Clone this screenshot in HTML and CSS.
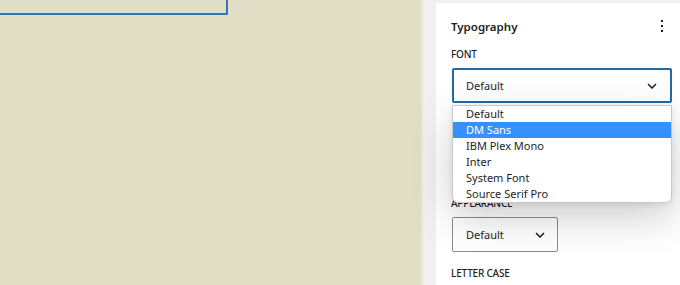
FILE: index.html
```html
<!DOCTYPE html>
<html>
<head>
<meta charset="utf-8">
<link rel="stylesheet" href="styles.css">
</head>
<body>
<div class="app">
  <div class="canvas">
    <div class="block"></div>
  </div>
  <div class="sidebar">
    <div class="panel">
      <div class="panel-head">
        <span class="title">Typography</span>
        <span class="kebab"><i></i><i></i><i></i></span>
      </div>
      <div class="field">
        <div class="label">Font</div>
        <div class="select focused">
          <span>Default</span>
          <svg class="chev" width="10" height="6" viewBox="0 0 10 6"><path d="M1 1l4 4 4-4" fill="none" stroke="#1e1e1e" stroke-width="1.5"/></svg>
        </div>
        <ul class="menu">
          <li>Default</li>
          <li class="sel">DM Sans</li>
          <li>IBM Plex Mono</li>
          <li>Inter</li>
          <li>System Font</li>
          <li>Source Serif Pro</li>
        </ul>
      </div>
      <div class="hidden-field">
        <div class="size-box"></div>
      </div>
      <div class="label">Appearance</div>
      <div class="select small">
        <span>Default</span>
        <svg class="chev" width="10" height="6" viewBox="0 0 10 6"><path d="M1 1l4 4 4-4" fill="none" stroke="#1e1e1e" stroke-width="1.5"/></svg>
      </div>
      <div class="label gap">Letter case</div>
    </div>
  </div>
</div>
</body>
</html>
```
FILE: styles.css
```css
* { box-sizing: border-box; }
html, body { margin: 0; padding: 0; }
body {
  width: 680px;
  height: 285px;
  overflow: hidden;
  font-family: "Noto Sans", "Open Sans", sans-serif;
  color: #1e1e1e;
  background: #e0dfc6;
}
.app { display: flex; height: 285px; }
.canvas { width: 421px; flex: none; background: #e0dfc6; }
.block {
  width: 228px;
  height: 15px;
  border-right: 2px solid #2f74b6;
  border-bottom: 2px solid #2f74b6;
}
.sidebar {
  flex: 1;
  background: #f0f0f0;
  border-left: 2px solid #e6e6da;
  padding: 3px 0 0 13px;
}
.panel {
  background: #fff;
  height: 100%;
  padding: 13px 8px 0 15px;
}
.panel-head {
  display: flex;
  justify-content: space-between;
  align-items: center;
  height: 20px;
}
.title { font-size: 11.5px; font-weight: 600; }
.kebab {
  display: flex;
  flex-direction: column;
  gap: 3px;
  margin-right: 9px;
}
.kebab i { display: block; width: 2px; height: 2px; background: #1e1e1e; }
.label {
  font-size: 10px;
  font-weight: 500;
  letter-spacing: -0.2px;
  text-transform: uppercase;
  line-height: 16px;
  margin-top: 10px;
}
.field { position: relative; }
.select {
  margin-top: 6px;
  height: 35px;
  border: 1px solid #8c8c8c;
  border-radius: 2px;
  display: flex;
  align-items: center;
  justify-content: space-between;
  padding: 0 13px 0 13px;
  font-size: 11px;
}
.select.focused { border: 2px solid #1f6aa6; padding-left: 12px; margin-left: 1px; }
.select.small { width: 106px; margin-left: 1px; padding-right: 12px; }
.chev { margin-top: 1px; }
.menu {
  position: absolute;
  left: 1px;
  right: 0;
  top: 59px;
  margin: 0;
  padding: 0;
  list-style: none;
  background: #fff;
  border: 1px solid #c8c8c8;
  border-radius: 0 0 6px 6px;
  box-shadow: 0 14px 40px rgba(0,0,0,0.2), 0 2px 6px rgba(0,0,0,0.08);
  z-index: 2;
  font-size: 11px;
}
.menu li { height: 16px; line-height: 16px; padding-left: 13px; }
.menu li.sel { background: #3392ff; color: #fff; }
.hidden-field { height: 82px; padding-top: 20px; }
.size-box { height: 36px; border: 1px solid #8c8c8c; margin-left: 1px; }
.label.gap { margin-top: 13px; }
```
